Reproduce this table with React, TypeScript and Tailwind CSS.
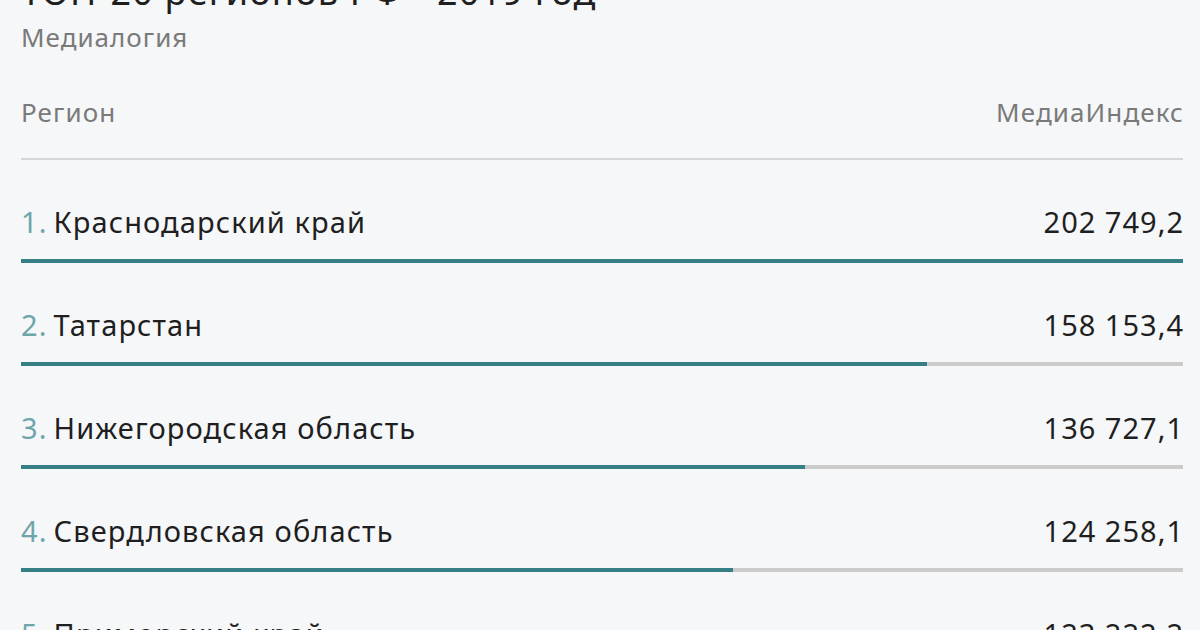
const rows = [
  { name: "Краснодарский край", value: "202 749,2", raw: 202749.2 },
  { name: "Татарстан", value: "158 153,4", raw: 158153.4 },
  { name: "Нижегородская область", value: "136 727,1", raw: 136727.1 },
  { name: "Свердловская область", value: "124 258,1", raw: 124258.1 },
  { name: "Приморский край", value: "123 222,2", raw: 123222.2 },
]

const max = rows[0].raw

export default function App() {
  return (
    <div className="h-[630px] w-[1200px] overflow-hidden bg-[#f6f7f9] pl-[21px] pr-[17px] font-['Noto_Sans',sans-serif] text-[#1f1f1f]">
      <h1 className="mt-[-28px] h-[40px] text-[36px] leading-[40px] tracking-[1.2px] whitespace-nowrap">ТОП-20 регионов РФ - 2019 год</h1>
      <div className="mt-[11px] h-[28px] text-[26px] leading-[28px] tracking-[1px] text-[#7a7a7a]">Медиалогия</div>
      <div className="mt-[47px] flex h-[28px] items-center justify-between text-[26px] leading-[28px] tracking-[1.1px] text-[#7a7a7a]">
        <span>Регион</span>
        <span className="mr-[-1px]">МедиаИндекс</span>
      </div>
      <div className="mt-[32px] h-[2px] bg-[#d6d6d6]" />
      {rows.map((r, i) => (
        <div key={r.name} className="pt-[42px]">
          <div className="flex h-[40px] items-center justify-between text-[29px] leading-[40px]">
            <span className="flex items-center gap-[6px] tracking-[1.1px]">
              <span className="text-[#6ea5ab]">{i + 1}.</span>
              <span>{r.name}</span>
            </span>
            <span className="mr-[-1px] tracking-[1px]">{r.value}</span>
          </div>
          <div className="mt-[17px] h-[4px] bg-[#cbcbcb]">
            <div className="h-full bg-[#357f85]" style={{ width: `${(r.raw / max) * 100}%` }} />
          </div>
        </div>
      ))}
    </div>
  )
}
